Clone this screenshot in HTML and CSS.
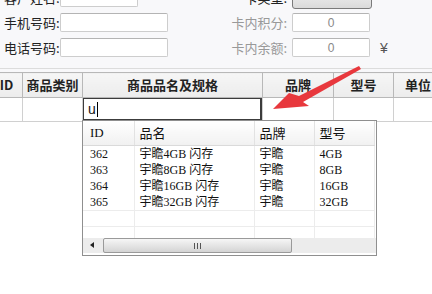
FILE: index.html
```html
<!DOCTYPE html>
<html lang="zh-CN">
<head>
  <meta charset="UTF-8">
  <title>商品录入</title>
  <link rel="stylesheet" href="styles.css">
</head>
<body>
  <div class="top">
    <div class="form">
      <label class="lbl">客户姓名:</label>
      <div><input class="txt short" type="text"></div>
      <label class="lbl lbl-r">卡类型:</label>
      <div class="select"><span class="caret-down"></span></div>
      <span></span>

      <label class="lbl">手机号码:</label>
      <div><input class="txt" type="text"></div>
      <label class="lbl lbl-r dim">卡内积分:</label>
      <div><input class="txt num" type="text" value="0"></div>
      <span></span>

      <label class="lbl">电话号码:</label>
      <div><input class="txt" type="text"></div>
      <label class="lbl lbl-r dim">卡内余额:</label>
      <div><input class="txt num" type="text" value="0"></div>
      <span class="yen">¥</span>
    </div>
    <div class="sep"></div>
  </div>

  <div class="grid-wrap">
    <table class="goods">
      <colgroup>
        <col style="width:32px"><col style="width:60px"><col style="width:180px">
        <col style="width:71px"><col style="width:60px"><col style="width:49px">
      </colgroup>
      <thead>
        <tr><th>ID</th><th>商品类别</th><th>商品品名及规格</th><th>品牌</th><th>型号</th><th>单位</th></tr>
      </thead>
      <tbody>
        <tr>
          <td></td><td></td>
          <td class="edit"><div class="edit-box">u<span class="cursor"></span></div></td>
          <td></td><td></td><td></td>
        </tr>
      </tbody>
    </table>

    <div class="suggest">
      <div class="suggest-body">
        <table class="list">
          <colgroup>
            <col style="width:51px"><col style="width:120px"><col style="width:60px"><col style="width:60px">
          </colgroup>
          <thead>
            <tr><th>ID</th><th>品名</th><th>品牌</th><th>型号</th></tr>
          </thead>
          <tbody>
            <tr><td>362</td><td>宇瞻4GB 闪存</td><td>宇瞻</td><td>4GB</td></tr>
            <tr><td>363</td><td>宇瞻8GB 闪存</td><td>宇瞻</td><td>8GB</td></tr>
            <tr><td>364</td><td>宇瞻16GB 闪存</td><td>宇瞻</td><td>16GB</td></tr>
            <tr><td>365</td><td>宇瞻32GB 闪存</td><td>宇瞻</td><td>32GB</td></tr>
            <tr class="blank"><td></td><td></td><td></td><td></td></tr>
            <tr class="fill"><td></td><td></td><td></td><td></td></tr>
          </tbody>
        </table>
      </div>
      <div class="hscroll">
        <span class="arrow-left"></span>
        <div class="thumb"><span class="grip"></span></div>
      </div>
    </div>
  </div>

  <svg class="pointer" width="432" height="294" viewBox="0 0 432 294">
    <polygon points="273,109 289,93 299,96 359,66 361,69 303,102 309,106" fill="#e8383d"/>
  </svg>
</body>
</html>
```

FILE: styles.css
```css
/* Reset */
* {
  box-sizing: border-box;
}

body {
  margin: 0;
  width: 432px;
  height: 294px;
  overflow: hidden;
  position: relative;
  background-color: #fff;
  font-family: "Noto Sans CJK SC", sans-serif;
  font-size: 13px;
  color: #222;
}

/* Customer form */
.top {
  background-color: #f8f8fa;
  height: 72px;
  overflow: hidden;
}

.form {
  display: grid;
  grid-template-columns: 56px 170px 62px 80px auto;
  grid-auto-rows: 19px;
  row-gap: 6px;
  align-items: center;
  margin-top: -12px;
  padding-left: 4px;
}

.lbl {
  font-size: 13px;
  line-height: 19px;
  white-space: nowrap;
}

.lbl-r {
  text-align: right;
  padding-right: 5px;
}

.dim {
  color: #999;
}

.txt {
  display: block;
  width: 108px;
  height: 19px;
  margin: 0;
  padding: 0 4px;
  border: 1px solid #cdcdcd;
  border-top-color: #b4b4b4;
  border-radius: 2px;
  background: #fff;
  font-family: "Liberation Sans", sans-serif;
  font-size: 12px;
  outline: none;
}

.txt.short {
  width: 78px;
}

.txt.num {
  width: 78px;
  text-align: center;
  color: #888;
}

.select {
  position: relative;
  width: 80px;
  height: 22px;
  border: 1px solid #7a7a7a;
  border-radius: 3px;
  background: linear-gradient(#f4f4f4, #dadada);
}

.caret-down {
  position: absolute;
  right: 6px;
  top: 8px;
  border-left: 3px solid transparent;
  border-right: 3px solid transparent;
  border-top: 4px solid #111;
}

.yen {
  padding-left: 8px;
  font-family: "Liberation Sans", sans-serif;
  font-size: 14px;
  color: #555;
}

.sep {
  height: 1px;
  margin-top: 11px;
  background-color: #dcdcdc;
}

/* Goods grid */
.grid-wrap {
  position: relative;
}

.goods {
  table-layout: fixed;
  border-collapse: collapse;
  width: 452px;
  margin-left: -10px;
}

.goods th {
  height: 25px;
  padding: 0 0 1px;
  border: 1px solid #b8b8b8;
  background: linear-gradient(#f6f6f6, #ececec);
  font-size: 13px;
  font-weight: bold;
  color: #222;
  text-align: center;
  white-space: nowrap;
}

.goods td {
  height: 23px;
  padding: 0;
  border-left: 1px solid #d0d0d0;
  border-right: 1px solid #d0d0d0;
  border-bottom: 1px solid #d0d0d0;
}

.goods td.edit {
  padding: 0;
}

.edit-box {
  height: 23px;
  border: 1px solid #3c3c3c;
  border-right-width: 2px;
  border-bottom-width: 2px;
  padding-left: 4px;
  background: #fff;
  font-family: "Liberation Sans", sans-serif;
  font-size: 14px;
  line-height: 20px;
  color: #111;
}

.cursor {
  display: inline-block;
  width: 1px;
  height: 15px;
  margin-left: 1px;
  vertical-align: -3px;
  background: #000;
}

/* Suggestion popup */
.suggest {
  position: absolute;
  left: 82px;
  top: 48px;
  width: 295px;
  height: 136px;
  border: 1px solid #8f8f8f;
  background: #fff;
  display: flex;
  flex-direction: column;
}

.suggest-body {
  height: 117px;
  overflow: hidden;
}

.list {
  table-layout: fixed;
  border-collapse: collapse;
  width: 291px;
  height: 117px;
  font-family: "Liberation Serif", "Noto Sans CJK SC", serif;
  font-size: 12px;
}

.list th {
  height: 24px;
  padding: 0 0 0 5px;
  border-right: 1px solid #e2e2e2;
  border-bottom: 1px solid #dadada;
  background: linear-gradient(#ffffff, #f1f1f1);
  font-family: "Liberation Serif", "Noto Sans CJK SC", serif;
  font-size: 13px;
  font-weight: normal;
  text-align: left;
  color: #111;
}

.list th:first-child,
.list td:first-child {
  padding-left: 7px;
}

.list td {
  height: 16px;
  padding: 0 0 0 5px;
  border-right: 1px solid #ececec;
  line-height: 16px;
  white-space: nowrap;
  color: #111;
}

.list tr.blank td {
  border-top: 1px solid #ececec;
  border-bottom: 1px solid #ececec;
}

.list tr.fill td {
  height: auto;
}

.hscroll {
  position: relative;
  height: 15px;
  background: #ececec;
}

.arrow-left {
  position: absolute;
  left: 7px;
  top: 4px;
  border-top: 3px solid transparent;
  border-bottom: 3px solid transparent;
  border-right: 4px solid #222;
}

.thumb {
  position: absolute;
  left: 20px;
  top: 0;
  width: 189px;
  height: 15px;
  border: 1px solid #9a9a9a;
  border-radius: 2px;
  background: linear-gradient(#f6f6f6, #d4d4d4);
}

.grip {
  position: absolute;
  left: 90px;
  top: 4px;
  width: 7px;
  height: 6px;
  background: repeating-linear-gradient(90deg, #555 0, #555 1px, transparent 1px, transparent 3px);
}

/* Red pointer overlay */
.pointer {
  position: absolute;
  left: 0;
  top: 0;
  pointer-events: none;
}
```
